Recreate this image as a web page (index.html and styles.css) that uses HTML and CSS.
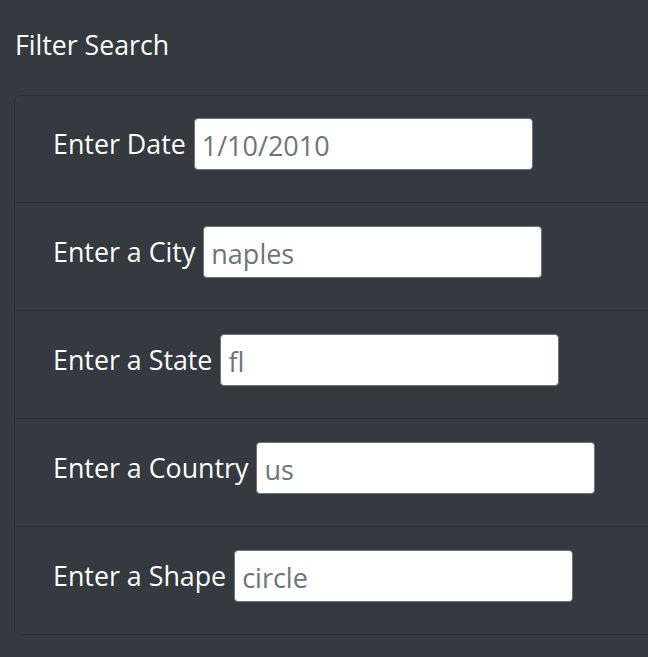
FILE: index.html
```html
<!DOCTYPE html>
<html>
<head>
<meta charset="utf-8">
<link rel="stylesheet" href="styles.css">
</head>
<body>
<div class="page">
  <h3 class="title">Filter Search</h3>
  <ul class="filters">
    <li class="filter">
      <label class="filter-label" for="date">Enter Date</label>
      <input class="filter-input" id="date" type="text" placeholder="1/10/2010">
    </li>
    <li class="filter">
      <label class="filter-label" for="city">Enter a City</label>
      <input class="filter-input" id="city" type="text" placeholder="naples">
    </li>
    <li class="filter">
      <label class="filter-label" for="state">Enter a State</label>
      <input class="filter-input" id="state" type="text" placeholder="fl">
    </li>
    <li class="filter">
      <label class="filter-label" for="country">Enter a Country</label>
      <input class="filter-input" id="country" type="text" placeholder="us">
    </li>
    <li class="filter">
      <label class="filter-label" for="shape">Enter a Shape</label>
      <input class="filter-input" id="shape" type="text" placeholder="circle">
    </li>
  </ul>
</div>
</body>
</html>
```
FILE: styles.css
```css
html, body {
  margin: 0;
  padding: 0;
  background: #343a40;
  overflow: hidden;
}
body {
  font-family: "Open Sans", "Noto Sans", sans-serif;
  color: #ffffff;
}
.page {
  padding: 0 0 0 14px;
  width: 634px;
  overflow: hidden;
}
.title {
  margin: 0;
  padding: 28px 0 0 1px;
  height: 95px;
  box-sizing: border-box;
  font-size: 26.7px;
  font-weight: 400;
  line-height: 34px;
}
.filters {
  list-style: none;
  margin: 0;
  padding: 0;
  width: 720px;
  border: 1px solid rgba(0, 0, 0, 0.15);
  border-radius: 6px;
}
.filter {
  display: flex;
  align-items: center;
  gap: 8px;
  padding: 23px 0 32px 38px;
  border-top: 1px solid rgba(0, 0, 0, 0.15);
}
.filter:first-child {
  border-top: none;
  padding-top: 22px;
}
.filter-label {
  font-size: 26.8px;
  line-height: 52px;
}
.filter-input {
  width: 339px;
  height: 52px;
  box-sizing: border-box;
  border: 1px solid #6c757d;
  border-radius: 4px;
  background: #fff;
  padding: 2px 7px 0;
  font-family: inherit;
  font-size: 27px;
  color: #6c757d;
}
.filter-input::placeholder {
  color: #6c757d;
  opacity: 1;
}
```
